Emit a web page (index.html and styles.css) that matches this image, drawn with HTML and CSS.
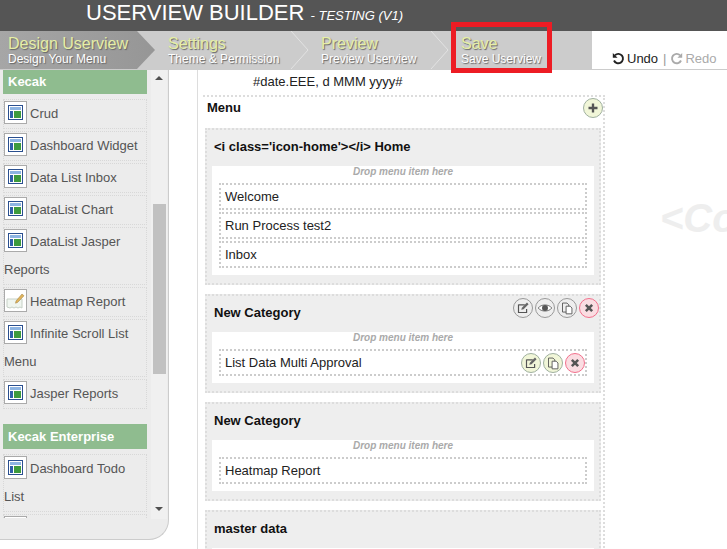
FILE: index.html
```html
<!DOCTYPE html>
<html lang="en">
<head>
<meta charset="utf-8">
<title>Userview Builder</title>
<link rel="stylesheet" href="styles.css">
</head>
<body>
<svg class="sprites" width="0" height="0" aria-hidden="true">
  <symbol id="i-win" viewBox="0 0 15 15">
    <rect x="0.5" y="0.5" width="14" height="14" fill="#fff" stroke="#2a4f8f"/>
    <rect x="2" y="2" width="11" height="3" fill="#8db4e2"/>
    <rect x="2" y="6" width="3" height="7" fill="#2f5fa8"/>
    <rect x="6" y="6" width="7" height="7" fill="#3d9a3d"/>
  </symbol>
  <symbol id="i-form" viewBox="0 0 21 21">
    <path d="M2 9h15v9l-2-1-2 1-2-1-2 1-2-1-2 1-3-1z" fill="#f0f6f0" stroke="#c6d0c6"/>
    <path d="M11 11l6-7 2 1.800-6.500 6.700-2 .7z" fill="#e0b45c" stroke="#9a7a3a" stroke-width=".5"/>
  </symbol>
  <symbol id="i-edit" viewBox="0 0 20 20">
    <path d="M5 6.500h7M5 6v9h9v-4" fill="none" stroke="#555" stroke-width="1.300"/>
    <path d="M8 12l.8-2.400 5.600-5.600 1.800 1.800-5.600 5.600z" fill="#666"/>
  </symbol>
  <symbol id="i-eye" viewBox="0 0 20 20">
    <path d="M2.500 10c3-4.500 12-4.500 15 0-3 4.500-12 4.500-15 0z" fill="#fff" stroke="#666"/>
    <circle cx="10" cy="10" r="3.300" fill="#555"/>
  </symbol>
  <symbol id="i-copy" viewBox="0 0 20 20">
    <path d="M5 4.500h5l2 2v8H5z" fill="none" stroke="#555"/>
    <path d="M9 8h4.500l2 2v6.500H9z" fill="#fff" stroke="#555"/>
  </symbol>
  <symbol id="i-x" viewBox="0 0 20 20">
    <path d="M6.500 6.500l7 7M13.500 6.500l-7 7" fill="none" stroke="#555" stroke-width="2.800"/>
  </symbol>
  <symbol id="i-plus" viewBox="0 0 20 20">
    <path d="M10 5v10M5 10h10" fill="none" stroke="#555" stroke-width="2.600"/>
  </symbol>
</svg>

<header class="title-bar">
  <h1 class="title">USERVIEW BUILDER <span class="title-sub">- TESTING (V1)</span></h1>
</header>

<nav class="step-bar">
  <div class="steps">
    <div class="step step-active step-w1">
      <div class="step-name">Design Userview</div>
      <div class="step-desc">Design Your Menu</div>
    </div>
    <div class="step step-w2">
      <div class="step-name">Settings</div>
      <div class="step-desc">Theme &amp; Permission</div>
    </div>
    <div class="step step-w3">
      <svg class="chevron" width="20" height="38" viewBox="0 0 20 38"><path d="M1 0l17 19L1 38" fill="none" stroke="#e2e2e2"/></svg>
      <div class="step-name">Preview</div>
      <div class="step-desc">Preview Userview</div>
    </div>
    <div class="step step-w4">
      <svg class="chevron" width="20" height="38" viewBox="0 0 20 38"><path d="M1 0l17 19L1 38" fill="none" stroke="#e2e2e2"/></svg>
      <div class="step-name">Save</div>
      <div class="step-desc">Save Userview</div>
    </div>
  </div>
  <div class="history">
    <svg class="hist-icon" width="13" height="13" viewBox="0 0 13 13"><path d="M3 3.200A4.700 4.700 0 1 1 2 8.500" fill="none" stroke="#222" stroke-width="1.900"/><path d="M.8 1v4.800h4.800z" fill="#222"/></svg>
    <span class="hist-on">Undo</span>
    <span class="hist-sep">|</span>
    <svg class="hist-icon" width="13" height="13" viewBox="0 0 13 13"><path d="M10 3.200A4.700 4.700 0 1 0 11 8.500" fill="none" stroke="#aaa" stroke-width="1.900"/><path d="M12.200 1v4.800H7.400z" fill="#aaa"/></svg>
    <span class="hist-off">Redo</span>
  </div>
  <div class="save-highlight"></div>
</nav>

<div class="workspace">
  <aside class="palette">
    <div class="palette-body">
      <div class="palette-list">
        <h2 class="group group-first">Kecak</h2>
        <div class="elem"><span class="elem-icon"><svg width="15" height="15"><use href="#i-win"/></svg></span>Crud</div>
        <div class="elem"><span class="elem-icon"><svg width="15" height="15"><use href="#i-win"/></svg></span>Dashboard Widget</div>
        <div class="elem"><span class="elem-icon"><svg width="15" height="15"><use href="#i-win"/></svg></span>Data List Inbox</div>
        <div class="elem"><span class="elem-icon"><svg width="15" height="15"><use href="#i-win"/></svg></span>DataList Chart</div>
        <div class="elem"><span class="elem-icon"><svg width="15" height="15"><use href="#i-win"/></svg></span>DataList Jasper Reports</div>
        <div class="elem"><span class="elem-icon"><svg width="21" height="21"><use href="#i-form"/></svg></span>Heatmap Report</div>
        <div class="elem"><span class="elem-icon"><svg width="15" height="15"><use href="#i-win"/></svg></span>Infinite Scroll List Menu</div>
        <div class="elem"><span class="elem-icon"><svg width="15" height="15"><use href="#i-win"/></svg></span>Jasper Reports</div>
        <h2 class="group group-next">Kecak Enterprise</h2>
        <div class="elem"><span class="elem-icon"><svg width="15" height="15"><use href="#i-win"/></svg></span>Dashboard Todo List</div>
        <div class="elem"><span class="elem-icon"></span></div>
      </div>
      <div class="scrollbar">
        <span class="arrow-up"></span>
        <span class="thumb"></span>
        <span class="arrow-down"></span>
      </div>
    </div>
  </aside>

  <main class="canvas">
    <div class="date-line">#date.EEE, d MMM yyyy#</div>
    <section class="menu-box">
      <div class="menu-head">
        <span>Menu</span>
        <button class="btn btn-green btn-add"><svg width="18" height="18"><use href="#i-plus"/></svg></button>
      </div>

      <div class="cat">
        <h3 class="cat-title">&lt;i class='icon-home'&gt;&lt;/i&gt; Home</h3>
        <div class="drop">
          <div class="drop-hint">Drop menu item here</div>
          <div class="item">Welcome</div>
          <div class="item">Run Process test2</div>
          <div class="item">Inbox</div>
        </div>
      </div>

      <div class="cat">
        <h3 class="cat-title">New Category</h3>
        <div class="tools tools-cat">
          <button class="btn btn-gray"><svg width="18" height="18"><use href="#i-edit"/></svg></button>
          <button class="btn btn-gray"><svg width="18" height="18"><use href="#i-eye"/></svg></button>
          <button class="btn btn-gray"><svg width="18" height="18"><use href="#i-copy"/></svg></button>
          <button class="btn btn-red"><svg width="18" height="18"><use href="#i-x"/></svg></button>
        </div>
        <div class="drop">
          <div class="drop-hint">Drop menu item here</div>
          <div class="item item-tools">List Data Multi Approval
            <div class="tools tools-item">
              <button class="btn btn-green"><svg width="18" height="18"><use href="#i-edit"/></svg></button>
              <button class="btn btn-green"><svg width="18" height="18"><use href="#i-copy"/></svg></button>
              <button class="btn btn-red"><svg width="18" height="18"><use href="#i-x"/></svg></button>
            </div>
          </div>
        </div>
      </div>

      <div class="cat">
        <h3 class="cat-title">New Category</h3>
        <div class="drop">
          <div class="drop-hint">Drop menu item here</div>
          <div class="item">Heatmap Report</div>
        </div>
      </div>

      <div class="cat">
        <h3 class="cat-title">master data</h3>
        <div class="drop drop-empty"></div>
      </div>
    </section>
    <div class="watermark">&lt;Content&gt;</div>
  </main>
</div>
</body>
</html>
```
FILE: styles.css
```css
* { box-sizing: border-box; }
html, body { height: 100%; }
body {
  margin: 0;
  height: 549px;
  overflow: hidden;
  background: #fff;
  font-family: "Liberation Sans", Arial, sans-serif;
  font-size: 13px;
  color: #222;
}
.sprites { position: absolute; }

.title-bar {
  height: 31px;
  background: #555;
  padding-left: 86px;
}
.title {
  margin: 0;
  font-size: 22px;
  font-weight: normal;
  line-height: 25px;
  color: #fff;
}
.title-sub { font-size: 13px; font-style: italic; }

.step-bar {
  position: relative;
  display: flex;
  height: 39px;
  border-bottom: 1px solid #ccc;
}
.steps {
  display: flex;
  width: 592px;
  background: #ccc;
}
.step {
  position: relative;
  padding: 4px 0 0 8px;
  flex: none;
}
.step-w1 { width: 155px; background: linear-gradient(90deg, #a6a6a6, #969696); clip-path: polygon(0 0, 137px 0, 155px 19px, 137px 38px, 0 38px); }
.step-w2 { width: 153px; padding-left: 13px; }
.step-w3 { width: 140px; padding-left: 13px; }
.step-w4 { width: 144px; padding-left: 13px; }
.chevron { position: absolute; left: -18px; top: 0; }
.step-name {
  font-size: 16px;
  line-height: 17px;
  color: #e6eea6;
  text-shadow: 1px 1px 1px #666;
}
.step-desc {
  font-size: 12px;
  line-height: 14px;
  color: #fff;
  text-shadow: 1px 1px 1px #666;
}
.save-highlight {
  position: absolute;
  left: 451px;
  top: -9px;
  width: 101px;
  height: 51px;
  border: 5px solid #ed1c24;
}
.history {
  display: flex;
  align-items: center;
  gap: 2px;
  padding: 17px 0 0 20px;
  flex: 1;
  font-size: 13px;
}
.hist-icon { flex: none; }
.hist-on { color: #222; }
.hist-sep { margin: 0 2px 0 3px; color: #999; }
.hist-off { color: #aaa; }

.workspace {
  display: flex;
  height: 479px;
}
.palette {
  flex: none;
  width: 169px;
  height: 470px;
  background: #ececec;
  border-right: 1px solid #ccc;
  border-bottom: 1px solid #ccc;
  border-bottom-right-radius: 20px;
}
.palette-body {
  display: flex;
  height: 449px;
  padding-left: 3px;
}
.palette-list {
  width: 144px;
  height: 448px;
  flex: none;
  overflow: hidden;
}
.group {
  margin: 0 0 5px;
  height: 25px;
  padding-left: 5px;
  background: #8fbc8f;
  color: #fff;
  font-size: 13px;
  font-weight: bold;
  line-height: 25px;
}
.group-first { height: 24px; line-height: 23px; }
.group-next { margin-top: 15px; }
.elem {
  min-height: 30px;
  margin-bottom: 2px;
  border: 1px dotted #d8d8d8;
  line-height: 28px;
  color: #555;
}
.elem-icon {
  float: left;
  display: flex;
  align-items: center;
  justify-content: center;
  width: 23px;
  height: 23px;
  margin: 1px 3px 0 0;
  background: #fff;
  border: 1px solid #aaa;
}
.scrollbar {
  display: flex;
  flex-direction: column;
  align-items: flex-end;
  width: 16px;
  margin-left: 4px;
  background: #f0f0f0;
}
.arrow-up, .arrow-down {
  align-self: center;
  width: 0;
  height: 0;
  border-left: 4px solid transparent;
  border-right: 4px solid transparent;
}
.arrow-up { margin-top: 6px; border-bottom: 4px solid #505050; }
.arrow-down { margin-top: 133px; border-top: 4px solid #505050; }
.thumb {
  width: 13px;
  height: 170px;
  margin: 124px 1px 0 0;
  background: #c1c1c1;
}

.canvas {
  position: relative;
  flex: 1;
  margin-left: 28px;
  border-left: 1px solid #ddd;
  padding-left: 5px;
  overflow: hidden;
}
.date-line {
  height: 25px;
  padding-left: 50px;
  line-height: 24px;
  color: #222;
}
.menu-box {
  width: 402px;
  border-top: 2px dotted #ddd;
  border-right: 2px dotted #ddd;
}
.menu-head {
  position: relative;
  height: 31px;
  padding: 1px 0 0 4px;
  font-size: 13px;
  font-weight: bold;
  line-height: 20px;
  color: #111;
}
.btn {
  display: inline-flex;
  align-items: center;
  justify-content: center;
  width: 20px;
  height: 20px;
  padding: 0;
  border-radius: 50%;
  border: 1px solid #999;
}
.btn-add { position: absolute; right: 0; top: 1px; }
.btn-gray { background: #eee; }
.btn-green { background: #f1f6d8; border-color: #9fb09f; }
.btn-red { background: #fadde2; border-color: #f2708c; }
.cat {
  position: relative;
  width: 396px;
  margin: 0 0 9px 2px;
  padding: 0 5px 8px;
  background: #eee;
  border: 2px dotted #ddd;
}
.cat-title {
  margin: 0;
  height: 36px;
  padding: 0 0 0 2px;
  font-size: 13px;
  font-weight: bold;
  line-height: 34px;
  color: #111;
}
.drop {
  padding: 0 7px 7px;
  background: #fff;
}
.drop-empty { height: 30px; }
.drop-hint {
  height: 17px;
  font-size: 10px;
  font-weight: bold;
  font-style: italic;
  line-height: 12px;
  text-align: center;
  color: #aaa;
}
.item {
  position: relative;
  height: 27px;
  margin-bottom: 2px;
  padding-left: 4px;
  border: 2px dotted #ccc;
  line-height: 23px;
  color: #222;
}
.item:last-child { margin-bottom: 0; }
.tools { position: absolute; display: flex; gap: 2px; }
.tools-cat { right: 0; top: 2px; }
.tools-item { right: 0; top: 2px; }
.watermark {
  position: absolute;
  left: 462px;
  top: 126px;
  font-size: 40px;
  font-weight: bold;
  font-style: italic;
  white-space: nowrap;
  color: #eee;
}
```
